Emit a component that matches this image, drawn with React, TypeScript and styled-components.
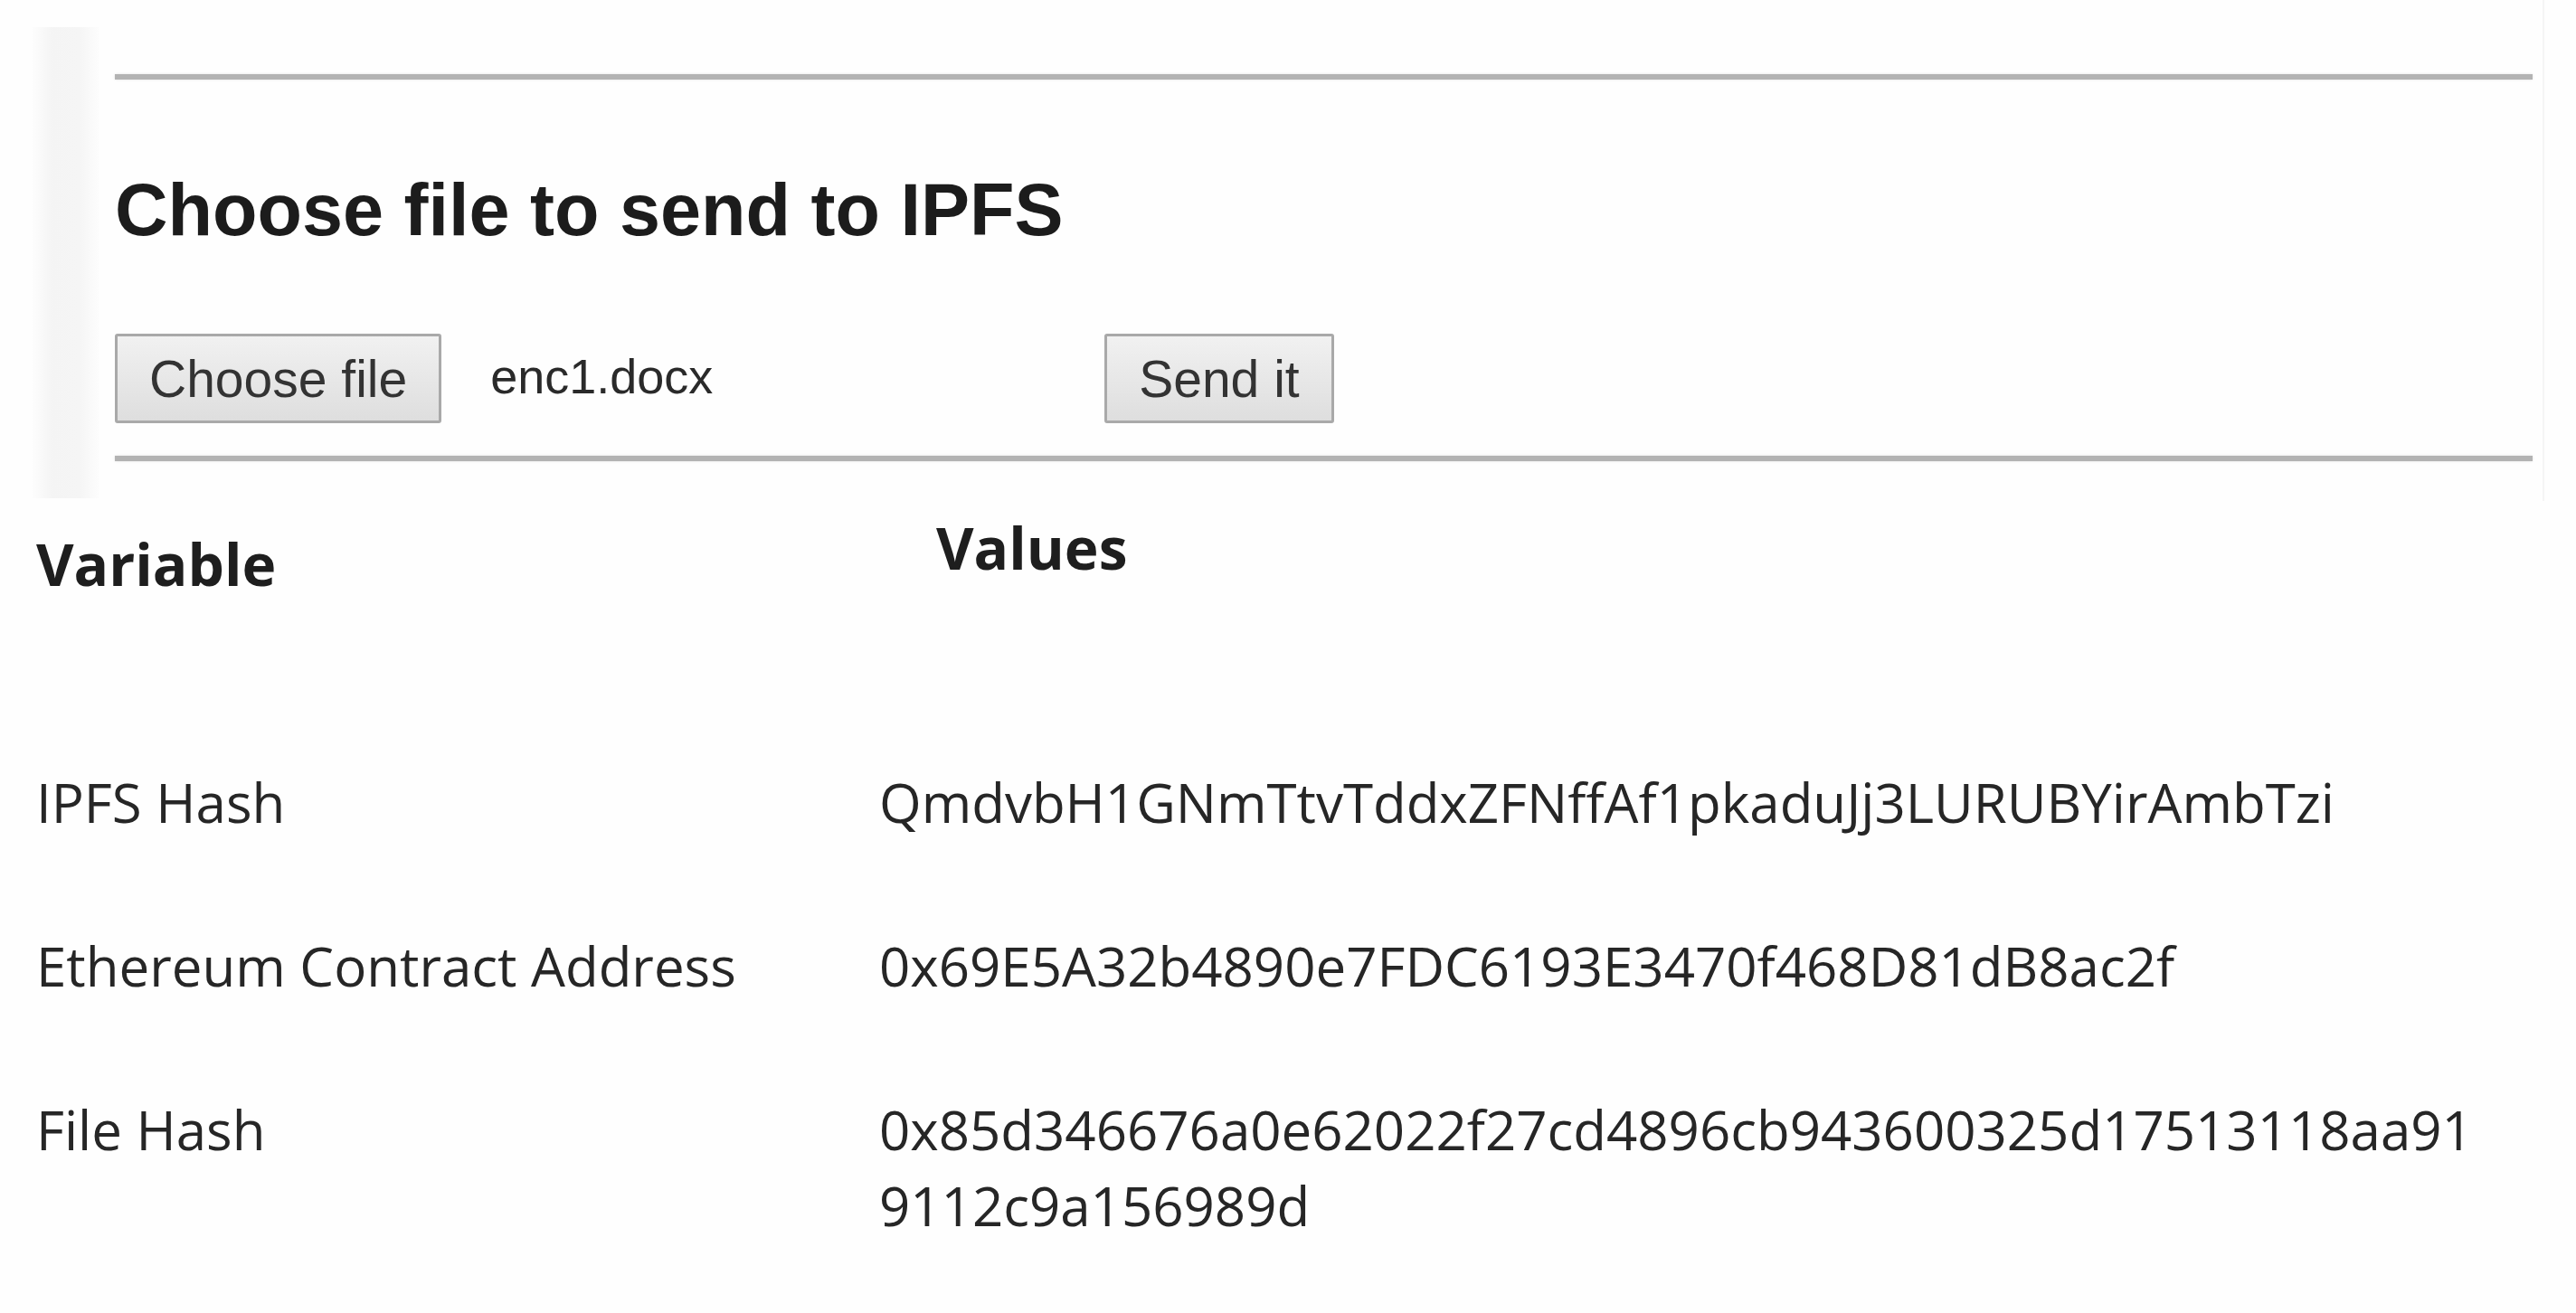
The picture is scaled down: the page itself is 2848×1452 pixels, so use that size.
import React from "react";
import styled, { createGlobalStyle } from "styled-components";

const GlobalStyle = createGlobalStyle`
  body {
    margin: 0;
    background: #fefefe;
  }
`;

const rows = [
  { label: "IPFS Hash", value: "QmdvbH1GNmTtvTddxZFNffAf1pkaduJj3LURUBYirAmbTzi" },
  { label: "Ethereum Contract Address", value: "0x69E5A32b4890e7FDC6193E3470f468D81dB8ac2f" },
  { label: "File Hash", value: "0x85d346676a0e62022f27cd4896cb943600325d17513118aa919112c9a156989d" },
];

const App = () => {
  return (
    <>
      <GlobalStyle />
      <Page>
        <Top>
          <SideBar />
          <Panel>
            <Rule />
            <Heading>Choose file to send to IPFS</Heading>
            <Controls>
              <Button>Choose file</Button>
              <FileName>enc1.docx</FileName>
              <Button>Send it</Button>
            </Controls>
            <Rule $gap={36} />
          </Panel>
        </Top>
        <Table>
          <HeaderRow>
            <HeaderCell $top={18}>Variable</HeaderCell>
            <HeaderCell $left={63}>Values</HeaderCell>
          </HeaderRow>
          <Body>
            {rows.map((r) => (
              <Row key={r.label}>
                <Label>{r.label}</Label>
                <Value>{r.value}</Value>
              </Row>
            ))}
          </Body>
        </Table>
      </Page>
    </>
  );
};

const Page = styled.div`
  width: 2848px;
  min-height: 1452px;
  box-sizing: border-box;
  padding-left: 36px;
  font-family: "Liberation Sans", Arial, sans-serif;
`;

const Top = styled.div`
  display: flex;
  align-items: flex-start;
  gap: 17px;
`;

const SideBar = styled.div`
  margin-top: 30px;
  width: 74px;
  height: 521px;
  background: linear-gradient(
    to right,
    #fdfdfd 0%,
    #f4f4f4 30%,
    #f5f5f5 70%,
    #fdfdfd 100%
  );
`;

const Panel = styled.section`
  width: 2673px;
  padding: 82px 11px 44px 0;
  border-right: 2px solid #f5f5f5;
`;

const Rule = styled.div<{ $gap?: number }>`
  margin-top: ${(p) => p.$gap ?? 0}px;
  height: 6px;
  background: #b3b3b3;
  box-shadow: 0 0 3px rgba(0, 0, 0, 0.12);
`;

const Heading = styled.h2`
  margin: 104px 0 0;
  font-size: 81px;
  line-height: 80px;
  font-weight: 700;
  color: #1c1c1c;
`;

const Controls = styled.div`
  margin-top: 97px;
  display: flex;
  align-items: center;
`;

const Button = styled.button`
  height: 99px;
  padding: 0 35px;
  font-family: "Liberation Sans", Arial, sans-serif;
  font-size: 57px;
  color: #333;
  background: linear-gradient(#f1f1f1, #dedede);
  border: 3px solid #a9a9a9;
  border-radius: 3px;
  cursor: pointer;
`;

const FileName = styled.span`
  width: 733px;
  box-sizing: border-box;
  padding-left: 54px;
  padding-bottom: 6px;
  font-size: 54px;
  color: #2a2a2a;
`;

const Table = styled.div`
  margin: 10px 0 0 4px;
  font-family: "Open Sans", "Noto Sans", sans-serif;
  color: #262626;
`;

const HeaderRow = styled.div`
  display: grid;
  grid-template-columns: 932px 1fr;
  font-size: 64px;
  line-height: 84px;
  font-weight: 700;
  color: #1e1e1e;
`;

const HeaderCell = styled.div<{ $top?: number; $left?: number }>`
  padding-top: ${(p) => p.$top ?? 0}px;
  padding-left: ${(p) => p.$left ?? 0}px;
`;

const Body = styled.div`
  margin-top: 179px;
  display: flex;
  flex-direction: column;
  gap: 97px;
`;

const Row = styled.div`
  display: grid;
  grid-template-columns: 932px 1775px;
  font-size: 60px;
  line-height: 84px;
`;

const Label = styled.div``;

const Value = styled.div`
  word-break: break-all;
`;

export default App;
